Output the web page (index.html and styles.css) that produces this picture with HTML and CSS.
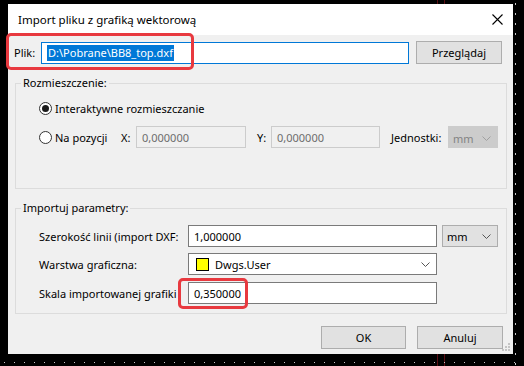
FILE: index.html
```html
<!DOCTYPE html>
<html lang="pl">
<head>
  <meta charset="UTF-8">
  <title>Import pliku z grafiką wektorową</title>
  <link rel="stylesheet" href="styles.css">
</head>
<body>

<div class="dialog">
  <div class="titlebar">
    <span class="title">Import pliku z grafiką wektorową</span>
    <svg class="close" width="11" height="11" viewBox="0 0 11 11">
      <path d="M0.5 0.5 L10.5 10.5 M10.5 0.5 L0.5 10.5" stroke="#000" stroke-width="1.1" fill="none"/>
    </svg>
  </div>

  <div class="file-row">
    <span class="file-label">Plik:</span>
    <div class="field focused"><span class="selected">D:\Pobrane\BB8_top.dxf</span></div>
    <button class="btn browse">Przeglądaj</button>
    <div class="mark mark-file"></div>
  </div>

  <fieldset class="group">
    <legend>Rozmieszczenie:</legend>
    <div class="group-body placement">
      <div class="radio-row">
        <span class="radio checked"></span>
        <span>Interaktywne rozmieszczanie</span>
      </div>
      <div class="radio-row">
        <div class="radio-cell">
          <span class="radio"></span>
          <span>Na pozycji</span>
        </div>
        <span class="coord-label">X:</span>
        <div class="field disabled coord-x">0,000000</div>
        <span class="coord-label coord-y-label">Y:</span>
        <div class="field disabled coord-y">0,000000</div>
        <span class="units-label">Jednostki:</span>
        <div class="combo disabled units">
          <span>mm</span>
          <svg width="9" height="5" viewBox="0 0 9 5"><path d="M0.5 0.5 L4.5 4.5 L8.5 0.5" stroke="#a0a0a0" fill="none"/></svg>
        </div>
      </div>
    </div>
  </fieldset>

  <fieldset class="group second">
    <legend>Importuj parametry:</legend>
    <div class="group-body params">
      <div class="param-row">
        <span class="param-label">Szerokość linii (import DXF:</span>
        <div class="field wide">1,000000</div>
        <div class="combo units-combo">
          <span>mm</span>
          <svg width="9" height="5" viewBox="0 0 9 5"><path d="M0.5 0.5 L4.5 4.5 L8.5 0.5" stroke="#555" fill="none"/></svg>
        </div>
      </div>
      <div class="param-row">
        <span class="param-label">Warstwa graficzna:</span>
        <div class="combo layer wide">
          <span class="swatch"></span>
          <span class="layer-name">Dwgs.User</span>
          <svg width="9" height="5" viewBox="0 0 9 5"><path d="M0.5 0.5 L4.5 4.5 L8.5 0.5" stroke="#555" fill="none"/></svg>
        </div>
      </div>
      <div class="param-row scale-row">
        <span class="param-label">Skala importowanej grafiki</span>
        <div class="field wide">0,350000</div>
        <div class="mark mark-scale"></div>
      </div>
    </div>
  </fieldset>

  <div class="footer">
    <button class="btn ok">OK</button>
    <button class="btn cancel">Anuluj</button>
  </div>

  <svg class="grip" width="9" height="9" viewBox="0 0 9 9">
    <rect x="6" y="0" width="2" height="2" fill="#c4c4c4"/>
    <rect x="3" y="3" width="2" height="2" fill="#c4c4c4"/>
    <rect x="6" y="3" width="2" height="2" fill="#c4c4c4"/>
    <rect x="0" y="6" width="2" height="2" fill="#c4c4c4"/>
    <rect x="3" y="6" width="2" height="2" fill="#c4c4c4"/>
    <rect x="6" y="6" width="2" height="2" fill="#c4c4c4"/>
  </svg>
</div>

</body>
</html>
```

FILE: styles.css
```css
* {
  box-sizing: border-box;
}

body {
  margin: 0;
  height: 366px;
  overflow: hidden;
  font-family: 'Noto Sans', 'Open Sans', sans-serif;
  font-size: 11px;
  color: #000;
  background:
    repeating-linear-gradient(to bottom, #c8c8c8 0 2px, transparent 2px 10px) 515px 3px / 1px 100% no-repeat,
    repeating-linear-gradient(to right, #c8c8c8 0 1px, transparent 1px 10px) 4px 362px / 100% 1px no-repeat,
    linear-gradient(#5a0d12, #5a0d12) 437px 0 / 1px 100% no-repeat,
    linear-gradient(#5a0d12, #5a0d12) 444px 0 / 1px 100% no-repeat,
    #000;
  padding: 4px 0 0 8px;
}

.dialog {
  position: relative;
  width: 505px;
  height: 350px;
  background: #f0f0f0;
}

.titlebar {
  height: 31px;
  background: #fff;
  display: flex;
  align-items: center;
  justify-content: space-between;
  padding: 0 10px 0 10px;
}

.title {
  font-size: 11.5px;
}

.close {
  display: block;
}

/* file row */
.file-row {
  position: relative;
  display: flex;
  align-items: center;
  height: 23px;
  margin-top: 6px;
  padding-left: 6px;
}

.file-label {
  width: 27px;
}

.field {
  height: 22px;
  background: #fff;
  border: 1px solid #7a7a7a;
  display: flex;
  align-items: center;
  padding-left: 5px;
  white-space: nowrap;
}

.field.focused {
  width: 368px;
  border-color: #0078d7;
}

.selected {
  background: #0078d7;
  color: #fff;
  line-height: 16px;
  padding: 0 1px;
}

.btn {
  height: 23px;
  font-family: inherit;
  font-size: 11px;
  color: #000;
  background: #e1e1e1;
  border: 1px solid #adadad;
  padding: 0;
}

.browse {
  width: 86px;
  margin-left: 7px;
}

/* red annotation frames */
.mark {
  position: absolute;
  border: 3px solid #e8393f;
  border-radius: 5px;
}

.mark-file {
  left: -2px;
  top: -8px;
  width: 188px;
  height: 37px;
}

.mark-scale {
  left: 139px;
  top: -4px;
  width: 70px;
  height: 31px;
}

/* group boxes */
.group {
  margin: 11px 6px 0 7px;
  padding: 0 0 0 5px;
  border: 1px solid #dcdcdc;
  min-width: 0;
}

.group legend {
  padding: 0 2px;
  line-height: 16px;
}

.group.second {
  margin-top: 11px;
}

.group-body {
  padding-left: 18px;
}

.placement {
  padding-top: 7px;
  padding-bottom: 40px;
}

.radio-row {
  display: flex;
  align-items: center;
  gap: 3px;
  height: 20px;
}

.radio-row + .radio-row {
  height: 22px;
  margin-top: 8px;
  gap: 0;
}

.radio-cell {
  display: flex;
  align-items: center;
  gap: 3px;
  width: 82px;
}

.radio {
  width: 13px;
  height: 13px;
  border: 1px solid #333;
  border-radius: 50%;
  background: #fff;
  display: flex;
  align-items: center;
  justify-content: center;
}

.radio.checked::after {
  content: "";
  width: 7px;
  height: 7px;
  border-radius: 50%;
  background: #1a1a1a;
}

.coord-label {
  width: 15px;
}

.coord-y-label {
  margin-left: 11px;
  width: 14px;
}

.field.disabled {
  height: 22px;
  background: #f0f0f0;
  border-color: #cccccc;
  color: #6d6d6d;
}

.coord-x {
  width: 110px;
}

.coord-y {
  width: 109px;
}

.units-label {
  margin-left: 11px;
  width: 57px;
}

.combo {
  height: 22px;
  display: flex;
  align-items: center;
  justify-content: space-between;
  padding: 0 6px 0 4px;
  background: #e1e1e1;
  border: 1px solid #adadad;
}

.combo.disabled {
  background: #cccccc;
  border-color: #cccccc;
  color: #838383;
}

.units {
  width: 50px;
  padding-top: 2px;
}

/* parameters */
.params {
  padding-top: 9px;
  padding-bottom: 9px;
  display: flex;
  flex-direction: column;
  gap: 6px;
}

.param-row {
  position: relative;
  display: flex;
  align-items: center;
  height: 22px;
}

.scale-row {
  margin-top: 1px;
}

.param-label {
  width: 149px;
  white-space: nowrap;
}

.field.wide,
.combo.wide {
  width: 249px;
}

.units-combo {
  width: 56px;
  margin-left: 5px;
}

.combo.layer {
  background: #fff;
  border-color: #7a7a7a;
  padding-left: 7px;
}

.swatch {
  width: 13px;
  height: 13px;
  background: #ffff00;
  border: 1px solid #000;
}

.layer-name {
  flex: 1;
  margin-left: 6px;
}

/* buttons */
.footer {
  display: flex;
  justify-content: flex-end;
  gap: 11px;
  margin-top: 12px;
  padding-right: 10px;
}

.ok {
  width: 85px;
}

.cancel {
  width: 86px;
}

.grip {
  position: absolute;
  right: 2px;
  bottom: 2px;
}
```
